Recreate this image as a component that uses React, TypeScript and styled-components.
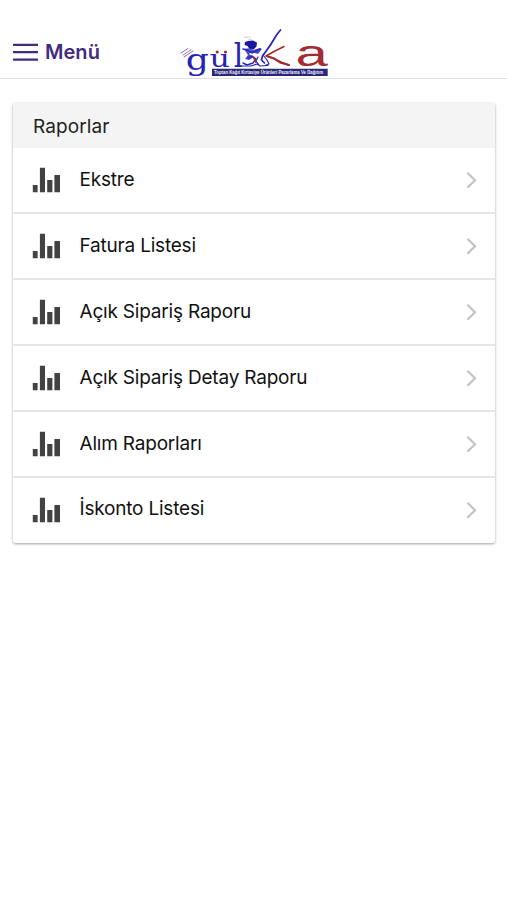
import React from "react";
import styled, { createGlobalStyle } from "styled-components";

const GlobalStyle = createGlobalStyle`
  * { box-sizing: border-box; }
  body { margin: 0; background: #fff; font-family: Inter, "Liberation Sans", sans-serif; }
`;

const Page = styled.div`
  min-height: 900px;
  background: #fff;
`;

const Header = styled.header`
  height: 79px;
  padding: 26px 13px 0;
  border-bottom: 1px solid #e2e2e2;
  display: grid;
  grid-template-columns: 166px 150px 1fr;
`;

const MenuButton = styled.button`
  display: flex;
  align-items: center;
  gap: 7px;
  height: 52px;
  padding: 0;
  border: 0;
  background: none;
  color: #432b80;
  font: 600 20px/24px Inter, sans-serif;
  letter-spacing: 0.05px;
`;

const Card = styled.section`
  margin: 24px 12px 0 13px;
  border-radius: 3px;
  overflow: hidden;
  background: #fff;
  box-shadow: 0 1px 3px rgba(0, 0, 0, 0.36);
`;

const CardTitle = styled.h1`
  margin: 0;
  height: 45px;
  padding: 0 20px;
  background: #f4f4f4;
  color: #222;
  font-size: 19px;
  font-weight: 400;
  line-height: 48px;
  letter-spacing: 0.1px;
`;

const List = styled.ul`
  list-style: none;
  margin: 0;
  padding: 0;
`;

const Row = styled.li`
  display: flex;
  align-items: center;
  height: 66px;
  padding: 0 18px 0 19px;
  border-bottom: 2px solid #e6e6e6;
  &:first-child { height: 65.5px; }
  &:last-child { border-bottom: 0; height: 65.5px; }
`;

const Label = styled.span`
  flex: 1;
  margin-left: 18.5px;
  padding-bottom: 1px;
  color: #111;
  font-size: 19px;
  line-height: 24px;
  letter-spacing: -0.2px;
  ${Row}:not(:last-child) & { padding-bottom: 0; }
  ${Row}:last-child & { padding-bottom: 2px; }
`;

const reports = [
  "Ekstre",
  "Fatura Listesi",
  "Açık Sipariş Raporu",
  "Açık Sipariş Detay Raporu",
  "Alım Raporları",
  "İskonto Listesi",
];

const MenuIcon = () => (
  <svg width="25" height="20" viewBox="0 0 25 20" stroke="#432b80" strokeWidth="2.3">
    <path d="M0 2.8h25M0 10.2h25M0 17.6h25" />
  </svg>
);

const StatsIcon = () => (
  <svg width="29" height="26" viewBox="0 0 29 26" fill="#424242">
    <path d="M.8 18h4.8v7.2H.8zM7.9.8H13v24.4H7.9zM15.2 13h5.2v12.2h-5.2zM22.4 8H28v17.2h-5.6z" />
  </svg>
);

const Chevron = () => (
  <svg width="11" height="18" viewBox="0 0 11 18" fill="none" stroke="#c4c4c6" strokeWidth="2.3">
    <path d="M1.4 1.7 9 9.2 1.4 16.7" />
  </svg>
);

const Logo = () => (
  <svg width="150" height="52" viewBox="179 26 150 52" aria-label="gülka">
    <g fill="none" strokeLinecap="round">
      <path d="m181 53 7-4.5M184 57l9-6" stroke="#5050bc" strokeWidth=".8" />
      <path d="m183 55 8-5.2" stroke="#b45256" strokeWidth=".8" />
    </g>
    <g fill="#2424b4" fontFamily="DejaVu Serif, serif">
      <text transform="translate(185.8 69.6) scale(1.25 1)" fontSize="29">g</text>
      <text transform="translate(209.5 67.3) scale(1.3 1)" fontSize="24.5">u</text>
      <text transform="translate(233.8 66.8) scale(.9 1)" fontSize="33">l</text>
    </g>
    <g fill="#a32c32">
      <circle cx="217.2" cy="52" r="1.6" />
      <circle cx="225.5" cy="52" r="1.6" />
    </g>
    <path d="m245 42 3-1 5-.5 4 2-.5 4-3 3-4-.5-2-3-3-1z" fill="#17179f" />
    <path d="m244 49 6-1 3 2 7-2 2 1-4 5-6-2-3 2 5 3-5 3-4-1 3-4z" fill="#4c4ccc" />
    <g fill="none" stroke="#2828bf" strokeLinecap="round" strokeLinejoin="round">
      <path d="m243 49 4 1 5 3 8-4M248 58l4-2 4 3-3 4-6 2-4-2" strokeWidth="1.4" />
      <path d="M243 66h8l6-2 3 2 8-.5M258 57l-2 4 3 4M263 55l4 5 2 4-3 1" strokeWidth="1.2" />
      <path d="m280.5 30-4 5-6 10-8 11-1 4 3 3" strokeWidth="1.7" />
      <path d="m278 33-8 12-6 9" strokeWidth="1" />
    </g>
    <path d="m244 38 3-1m1 3 4-1m-6-2h5" fill="none" stroke="#c7c7dc" strokeWidth=".8" />
    <g fill="none" stroke="#a2272e" strokeLinecap="round" strokeLinejoin="round">
      <path d="m284 46.5-9 4.5-9 5 7 2 8 4 8 3.2" strokeWidth="1.5" />
      <path d="m268 56.5 6 2 6 4 9 2.5" strokeWidth="1.9" />
      <path d="m254 58 2 4" strokeWidth="1.8" />
    </g>
    <text transform="translate(295.5 65.7) scale(1.57 1)" fill="#a32c32" fontFamily="Liberation Sans, sans-serif" fontSize="37">a</text>
    <path d="M212 68.8h115.7v7.2H212z" fill="#292777" />
    <text x="214" y="74.2" fill="#eeeefa" fontFamily="Liberation Sans, sans-serif" fontWeight="700" fontSize="5" textLength="109" lengthAdjust="spacingAndGlyphs">Toptan Kağıt Kırtasiye Ürünleri Pazarlama Ve Dağıtım</text>
  </svg>
);

export default function App() {
  return (
    <Page>
      <GlobalStyle />
      <Header>
        <MenuButton>
          <MenuIcon />
          Menü
        </MenuButton>
        <Logo />
      </Header>
      <Card>
        <CardTitle>Raporlar</CardTitle>
        <List>
          {reports.map((name) => (
            <Row key={name}>
              <StatsIcon />
              <Label>{name}</Label>
              <Chevron />
            </Row>
          ))}
        </List>
      </Card>
    </Page>
  );
}
